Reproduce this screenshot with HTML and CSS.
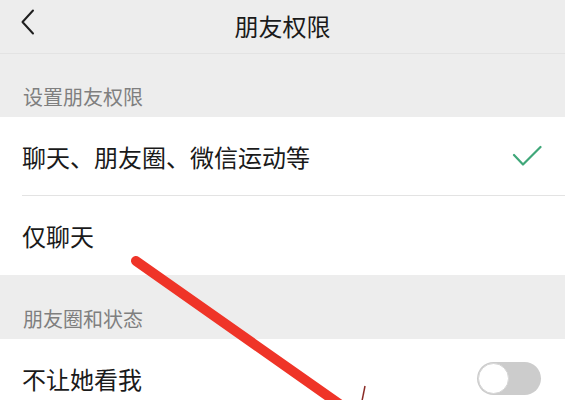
FILE: index.html
```html
<!DOCTYPE html>
<html>
<head>
    <meta charset="utf-8">
    <title>朋友权限</title>
    <link rel="stylesheet" href="styles.css">
</head>
<body>
    <div class="page">
        <div class="header">
            <span class="back">
                <svg width="14" height="26" viewBox="0 0 14 26">
                    <path d="M12 1.5 L1.5 13 L12 24.5" fill="none" stroke="#1f1f1f" stroke-width="2" stroke-linecap="round" stroke-linejoin="round"/>
                </svg>
            </span>
            <h1>朋友权限</h1>
        </div>

        <div class="section-title">设置朋友权限</div>
        <div class="group">
            <div class="row">
                <span>聊天、朋友圈、微信运动等</span>
                <svg class="check" width="30" height="22" viewBox="0 0 30 22">
                    <path d="M2 10 L11 19.5 L28.5 2" fill="none" stroke="#3fa779" stroke-width="2.2" stroke-linecap="round" stroke-linejoin="round"/>
                </svg>
            </div>
            <div class="row row-last">
                <span>仅聊天</span>
            </div>
        </div>

        <div class="section-title section-second">朋友圈和状态</div>
        <div class="group">
            <div class="row row-last">
                <span>不让她看我</span>
                <span class="switch"><span class="knob"></span></span>
            </div>
        </div>

        <!-- 红色标注箭头 -->
        <svg class="annotation" width="565" height="400" viewBox="0 0 565 400">
            <line x1="136" y1="261" x2="345" y2="408" stroke="#ef3428" stroke-width="10" stroke-linecap="round"/>
            <line x1="365" y1="386" x2="362" y2="401" stroke="#8a2b26" stroke-width="1.5"/>
        </svg>
    </div>
</body>
</html>
```

FILE: styles.css
```css
:root {
    --bg-color: #ededed;
    --text-color: #1a1a1a;
    --label-color: #7f7f7f;
    --line-color: #e3e3e3;
}

* {
    margin: 0;
    padding: 0;
    box-sizing: border-box;
}

html,
body {
    overflow: hidden;
}

body {
    font-family: "Noto Sans CJK SC", "Noto Sans", sans-serif;
    background-color: var(--bg-color);
    color: var(--text-color);
}

.page {
    position: relative;
    width: 565px;
    height: 400px;
}

.header {
    display: flex;
    align-items: center;
    justify-content: center;
    position: relative;
    height: 54px;
    padding-bottom: 12px;
    border-bottom: 1px solid var(--line-color);
}

.back {
    position: absolute;
    left: 21px;
    top: 9px;
    display: flex;
}

.header h1 {
    font-size: 24px;
    font-weight: 400;
    line-height: 24px;
    padding-top: 10px;
}

.section-title {
    font-size: 20px;
    line-height: 20px;
    color: var(--label-color);
    padding: 33px 23px 10px;
}

.section-second {
    padding-top: 34px;
}

.group {
    background: #fff;
}

.row {
    display: flex;
    align-items: center;
    justify-content: space-between;
    height: 79px;
    margin-left: 22px;
    padding-right: 24px;
    font-size: 24px;
    border-bottom: 1px solid var(--line-color);
}

.row-last {
    border-bottom: none;
}

.check {
    margin-right: -1px;
}

.switch {
    display: flex;
    align-items: center;
    width: 64px;
    height: 33px;
    padding: 1px;
    border-radius: 17px;
    background: #cccccc;
}

.knob {
    width: 31px;
    height: 31px;
    border-radius: 50%;
    background: #fff;
    border: 1px solid #d6d6d6;
}

.annotation {
    position: absolute;
    left: 0;
    top: 0;
    pointer-events: none;
}
```
